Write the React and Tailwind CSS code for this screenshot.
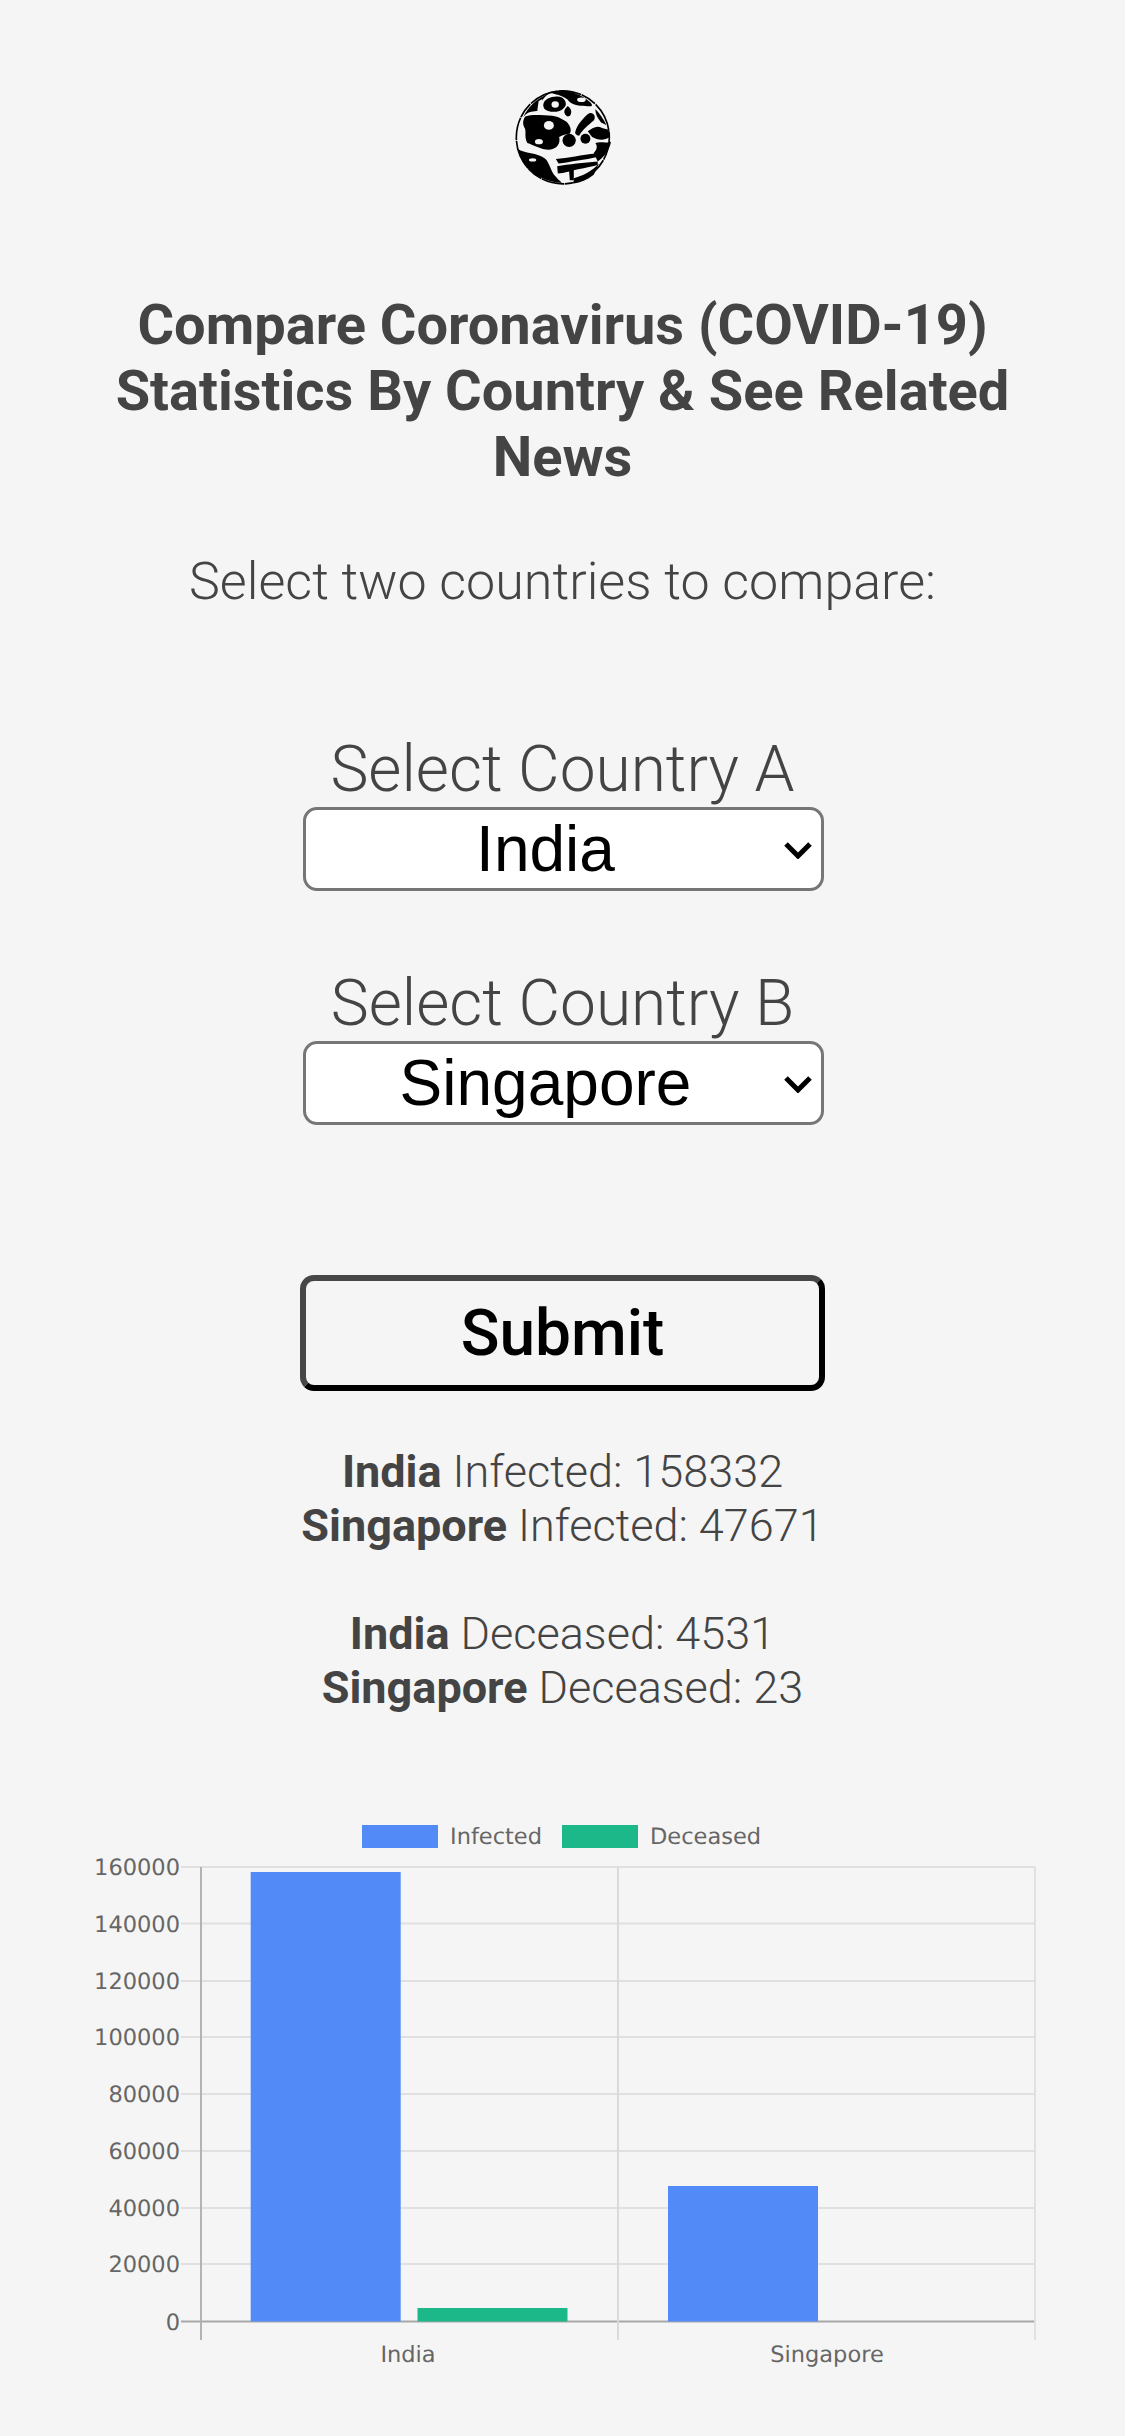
import React from "react";

function Logo() {
  return (
    <svg viewBox="100 85 295 300" className="w-[98px] h-[100px] block" aria-label="Globe logo">
      <defs>
        <filter id="soft"><feGaussianBlur stdDeviation="1.8" /></filter>
      </defs>
      <g filter="url(#soft)">
        <circle cx="247" cy="233" r="140" fill="#f5f5f5" stroke="#000" strokeWidth="5" strokeDasharray="70 2 48 3 90 2" />
        <path d="M128 172C140 145 165 118 205 100C192 112 178 125 172 152C160 158 145 150 128 172Z" fill="#000" />
        <path d="M188 135C190 118 210 110 228 110C246 108 258 122 256 136C250 150 235 158 218 156C200 156 188 150 188 135Z" fill="#000" />
        <path d="M205 97C245 88 290 92 330 128C345 145 322 138 300 138C282 136 268 130 262 120C245 105 225 104 205 97Z" fill="#000" />
        <path d="M262 139C270 146 276 154 270 166C264 174 256 170 252 160C250 150 256 146 262 139Z" fill="#000" />
        <path d="M134 170C160 162 190 168 215 168C235 170 250 182 258 186C268 196 275 210 268 222C256 222 246 226 236 232C240 250 232 268 205 270C180 270 160 256 140 250C130 232 138 215 132 205C124 190 128 178 134 170Z" fill="#000" />
        <circle cx="266" cy="242" r="20" fill="#000" />
        <circle cx="315" cy="237" r="15" fill="#000" />
        <path d="M285 215C290 195 305 180 320 165C335 150 350 170 340 182C325 195 310 205 296 228C288 228 282 222 285 215Z" fill="#000" />
        <path d="M322 215C335 205 350 195 365 205L385 210L388 232C370 245 350 240 335 232Z" fill="#000" />
        <path d="M345 250C360 245 375 252 392 246C388 268 374 290 352 306L340 280C350 270 352 260 345 250Z" fill="#000" />
        <path d="M345 148C356 160 370 178 378 196L362 188C352 175 345 165 345 148Z" fill="#000" />
        <path d="M112 268C130 282 170 278 195 298C208 312 210 335 226 352C232 360 238 364 244 370C205 368 160 350 132 316C122 300 116 286 112 268Z" fill="#000" />
        <path d="M226 298C262 296 305 286 346 282L350 292C315 300 270 306 234 312Z" fill="#000" />
        <path d="M230 320C265 314 310 310 352 306L352 316C320 324 295 328 280 332L280 362L268 362L266 336C252 340 240 342 232 342Z" fill="#000" />
        <path d="M280 356C305 350 335 335 356 312L340 346C320 362 300 370 280 372Z" fill="#000" />
        <ellipse cx="205" cy="197" rx="15" ry="13" fill="#f5f5f5" />
        <ellipse cx="175" cy="246" rx="12" ry="8" fill="#f5f5f5" />
        <ellipse cx="156" cy="301" rx="11" ry="5" fill="#f5f5f5" />
        <ellipse cx="224" cy="134" rx="11" ry="10" fill="#f5f5f5" />
        <ellipse cx="303" cy="120" rx="13" ry="7" fill="#f5f5f5" />
        <path d="M174 125C178 120 184 118 186 118L178 150L170 152Z" fill="#f5f5f5" />
      </g>
    </svg>
  );
}

const yTicks = [
  ["160000", 1867], ["140000", 1923.5], ["120000", 1981], ["100000", 2037], ["80000", 2094], ["60000", 2151], ["40000", 2208], ["20000", 2264], ["0", 2321.5],
];

function Chart() {
  return (
    <svg viewBox="0 1800 1125 580" textRendering="geometricPrecision" className="block w-[1125px] h-[580px]" style={{ fontFamily: "'DejaVu Sans', sans-serif" }}>
      <rect x="362" y="1825" width="76" height="23" fill="#528bf7" />
      <text x="450" y="1844" fontSize="22.5" fill="#666">Infected</text>
      <rect x="562" y="1825" width="76" height="23" fill="#1cb88a" />
      <text x="650" y="1844" fontSize="22.5" fill="#666">Deceased</text>

      {yTicks.map(([l, y]) => (
        <g key={l}>
          <line x1="181" x2="1035" y1={y} y2={y} stroke={l === "0" ? "#a8a8a8" : "#e0e0e0"} strokeWidth="1.9" />
          <text x="180" y={y + 8} fontSize="22.5" fill="#666" textAnchor="end">{l}</text>
        </g>
      ))}
      <line x1="201" x2="201" y1="1867" y2="2340" stroke="#b0b0b0" strokeWidth="1.9" />
      <line x1="618" x2="618" y1="1867" y2="2340" stroke="#d9d9d9" strokeWidth="1.9" />
      <line x1="1035" x2="1035" y1="1867" y2="2340" stroke="#e0e0e0" strokeWidth="1.9" />

      <rect x="250.7" y="1872" width="150" height="449.5" fill="#528bf7" />
      <rect x="417.5" y="2308" width="150" height="13.5" fill="#1cb88a" />
      <rect x="668" y="2186" width="150" height="135.5" fill="#528bf7" />

      <text x="408" y="2362" fontSize="22.5" fill="#666" textAnchor="middle">India</text>
      <text x="827" y="2362" fontSize="22.5" fill="#666" textAnchor="middle">Singapore</text>
    </svg>
  );
}

function CountrySelect({ label, value, options, className }) {
  return (
    <div className={`flex flex-col items-center ${className || ""}`}>
      <label className="text-[64px] leading-[66px] font-light text-[#444]">{label}</label>
      <div className="relative ml-[2px] mt-[4px] w-[521px] h-[84px]">
        <select
          defaultValue={value}
          className="appearance-none w-full h-full bg-white border-[3px] border-[#767676] rounded-[14px] pr-[36px] text-center text-[64px] leading-[78px] text-black font-['Liberation_Sans',sans-serif]"
        >
          {options.map((o) => <option key={o}>{o}</option>)}
        </select>
        <svg viewBox="0 0 28 18" className="absolute right-[12px] top-[34px] w-[28px] h-[18px] pointer-events-none" fill="none" stroke="#000" strokeWidth="5">
          <path d="M2 3L14 15L26 3" />
        </svg>
      </div>
    </div>
  );
}

function Stat({ name, text }) {
  return (
    <div className="h-[54px] leading-[54px]">
      <span className="font-bold">{name}</span> {text}
    </div>
  );
}

export default function App() {
  const options = ["India", "Singapore"];
  return (
    <div className="w-[1125px] h-[2436px] overflow-hidden bg-[#f5f5f5] flex flex-col items-center font-['Roboto',sans-serif] text-[#444]">
      <div className="mt-[88px]"><Logo /></div>
      <h1 className="mt-[104px] w-[960px] text-center text-[56px] leading-[66px] font-bold">
        Compare Coronavirus (COVID-19) Statistics By Country &amp; See Related News
      </h1>
      <p className="mt-[59px] text-[52px] leading-[66px] font-light text-center">Select two countries to compare:</p>
      <CountrySelect className="mt-[122px]" label="Select Country A" value="India" options={options} />
      <CountrySelect className="mt-[80px]" label="Select Country B" value="Singapore" options={options} />
      <button className="mt-[150px] w-[525px] h-[116px] pt-[2px] border-[6px] border-t-[#474747] border-l-[#474747] border-r-black border-b-black rounded-[14px] text-[64px] font-medium text-black text-center">
        Submit
      </button>
      <div className="mt-[54px] text-[45px] font-light text-center">
        <Stat name="India" text="Infected: 158332" />
        <Stat name="Singapore" text="Infected: 47671" />
        <div className="h-[54px]" />
        <Stat name="India" text="Deceased: 4531" />
        <Stat name="Singapore" text="Deceased: 23" />
      </div>
      <div className="mt-[85px]"><Chart /></div>
    </div>
  );
}
